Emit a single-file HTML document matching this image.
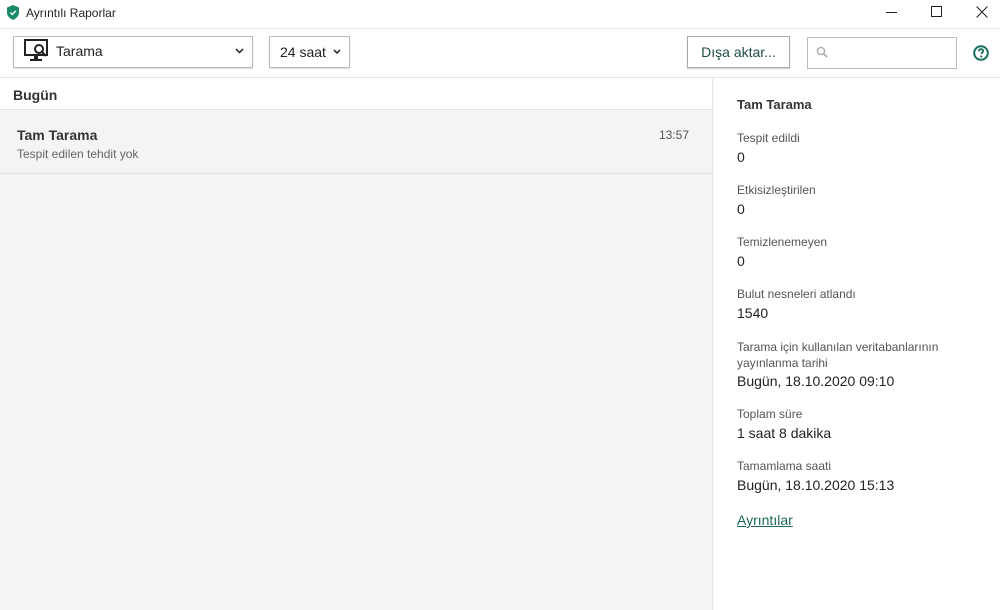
<!DOCTYPE html>
<html><head><meta charset="utf-8"><style>
*{margin:0;padding:0;box-sizing:border-box}
body{width:1000px;height:610px;overflow:hidden;background:#fff;font-family:"Liberation Sans",Arial,sans-serif;color:#222;position:relative}
.a{position:absolute}
.lbl{font-size:12px;color:#555}
.val{font-size:14px;color:#222}
</style></head><body>
<!-- title bar -->
<svg class="a" style="left:7px;top:5px" width="12" height="15" viewBox="0 0 12 15"><path d="M6 0L12 2.5V8C12 11 9 13.5 6 15C3 13.5 0 11 0 8V2.5Z" fill="#1a8a6a"/><path d="M3.3 7.5L5.3 9.5L8.8 5.8" stroke="#fff" stroke-width="1.4" fill="none"/></svg>
<div class="a" style="left:26px;top:6px;font-size:12px;color:#222">Ayrıntılı Raporlar</div>
<div class="a" style="left:886px;top:12px;width:11px;height:1px;background:#222"></div>
<div class="a" style="left:931px;top:6px;width:11px;height:11px;border:1px solid #222"></div>
<svg class="a" style="left:976px;top:6px" width="12" height="12"><path d="M0.5 0.5L11.5 11.5M11.5 0.5L0.5 11.5" stroke="#222" stroke-width="1"/></svg>
<div class="a" style="left:0;top:28px;width:1000px;height:1px;background:#e6e6e6"></div>
<!-- toolbar -->
<div class="a" style="left:13px;top:36px;width:240px;height:32px;border:1px solid #bbb;box-shadow:0 1px 1px #ddd"></div>
<svg class="a" style="left:24px;top:39px" width="25" height="24" viewBox="0 0 25 24"><rect x="1" y="1" width="22" height="15" fill="none" stroke="#222" stroke-width="2"/><rect x="6" y="20" width="12" height="2" fill="#222"/><rect x="10" y="16" width="4" height="4" fill="#222"/><circle cx="15" cy="10" r="4" fill="#fff" stroke="#222" stroke-width="2"/><path d="M18 13L22 17" stroke="#222" stroke-width="2.2"/></svg>
<div class="a" style="left:56px;top:43px;font-size:14px">Tarama</div>
<svg class="a" style="left:235px;top:48px" width="9" height="6"><path d="M1 1L4.5 4.5L8 1" stroke="#333" stroke-width="1.6" fill="none"/></svg>
<div class="a" style="left:269px;top:36px;width:81px;height:32px;border:1px solid #bbb;box-shadow:0 1px 1px #ddd"></div>
<div class="a" style="left:280px;top:44px;font-size:14px">24 saat</div>
<svg class="a" style="left:333px;top:49px" width="8" height="6"><path d="M1 1L4 4L7 1" stroke="#333" stroke-width="1.6" fill="none"/></svg>
<div class="a" style="left:687px;top:36px;width:103px;height:32px;border:1px solid #aaa;box-shadow:0 1px 1px #ccc;font-size:14px;color:#1d4d44;text-align:center;line-height:30px">Dışa aktar...</div>
<div class="a" style="left:807px;top:37px;width:150px;height:32px;border:1px solid #bbb"></div>
<svg class="a" style="left:816px;top:46px" width="14" height="14"><circle cx="5" cy="5" r="3.6" fill="none" stroke="#aaa" stroke-width="1.4"/><path d="M7.8 7.8L11 11" stroke="#aaa" stroke-width="1.6"/></svg>
<svg class="a" style="left:973px;top:45px" width="16" height="16" viewBox="0 0 16 16"><circle cx="8" cy="8" r="6.8" fill="none" stroke="#13705a" stroke-width="2"/><path d="M5.8 6.2C5.8 4.9 6.8 4.2 8 4.2C9.3 4.2 10.2 5 10.2 6C10.2 7.3 8.5 7.5 8.5 9" stroke="#13705a" stroke-width="1.8" fill="none"/><circle cx="8.3" cy="11.5" r="1.1" fill="#13705a"/></svg>
<div class="a" style="left:0;top:77px;width:1000px;height:1px;background:#e6e6e6"></div>
<!-- left pane -->
<div class="a" style="left:0;top:78px;width:712px;height:532px;background:#f4f4f4"></div>
<div class="a" style="left:0;top:78px;width:712px;height:31px;background:#fff"></div>
<div class="a" style="left:13px;top:87px;font-size:14px;font-weight:bold;color:#333">Bugün</div>
<div class="a" style="left:0;top:109px;width:712px;height:1px;background:#e4e4e4"></div>
<div class="a" style="left:17px;top:127px;font-size:14px;font-weight:bold;color:#333">Tam Tarama</div>
<div class="a" style="left:17px;top:147px;font-size:12px;color:#666">Tespit edilen tehdit yok</div>
<div class="a" style="left:659px;top:128px;font-size:12px;color:#555">13:57</div>
<div class="a" style="left:0;top:173px;width:712px;height:1px;background:#e0e0e0"></div>
<div class="a" style="left:712px;top:78px;width:1px;height:532px;background:#e6e6e6"></div>
<!-- right pane -->
<div class="a" style="left:737px;top:97px;font-size:13px;font-weight:bold;color:#333">Tam Tarama</div>
<div class="a lbl" style="left:737px;top:131px">Tespit edildi</div>
<div class="a val" style="left:737px;top:149px">0</div>
<div class="a lbl" style="left:737px;top:183px">Etkisizleştirilen</div>
<div class="a val" style="left:737px;top:201px">0</div>
<div class="a lbl" style="left:737px;top:235px">Temizlenemeyen</div>
<div class="a val" style="left:737px;top:253px">0</div>
<div class="a lbl" style="left:737px;top:287px">Bulut nesneleri atlandı</div>
<div class="a val" style="left:737px;top:305px">1540</div>
<div class="a lbl" style="left:737px;top:339px;width:230px;line-height:16px">Tarama için kullanılan veritabanlarının yayınlanma tarihi</div>
<div class="a val" style="left:737px;top:373px">Bugün, 18.10.2020 09:10</div>
<div class="a lbl" style="left:737px;top:407px">Toplam süre</div>
<div class="a val" style="left:737px;top:425px">1 saat 8 dakika</div>
<div class="a lbl" style="left:737px;top:459px">Tamamlama saati</div>
<div class="a val" style="left:737px;top:477px">Bugün, 18.10.2020 15:13</div>
<div class="a" style="left:737px;top:512px;font-size:14px;color:#1d6a5a;text-decoration:underline">Ayrıntılar</div>
</body></html>
